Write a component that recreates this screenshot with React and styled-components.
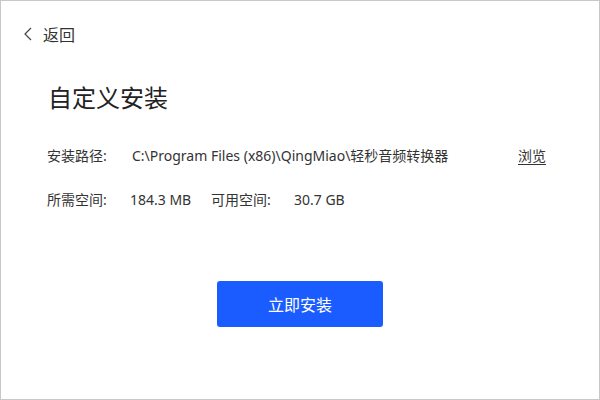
import styled, { createGlobalStyle } from "styled-components";

const Global = createGlobalStyle`
  html, body { margin: 0; padding: 0; background: #fff; }
  body {
    font-family: "Noto Sans", "Noto Sans CJK SC", sans-serif;
    color: #333;
  }
`;

const Window = styled.div`
  width: 600px;
  height: 400px;
  box-sizing: border-box;
  border: 1px solid #c8c8c8;
  background: #fff;
  display: flex;
  flex-direction: column;
`;

const Back = styled.div`
  display: flex;
  align-items: center;
  gap: 11px;
  padding: 23px 0 0 23px;
  height: 20px;
  font-size: 16px;
  color: #333;
  cursor: pointer;
`;

const Title = styled.h1`
  margin: 38px 0 0 47px;
  font-size: 24px;
  font-weight: 400;
  line-height: 32px;
  color: #222;
`;

const Info = styled.div`
  margin: 32px 0 0 46px;
  display: flex;
  flex-direction: column;
  gap: 24px;
  font-size: 14px;
  line-height: 20px;
`;

const Row = styled.div`
  display: flex;
  align-items: center;
`;

const Label = styled.span`
  width: ${(p) => p.w || 83}px;
  flex: none;
`;

const Value = styled.span`
  width: ${(p) => p.w || "auto"}px;
  flex: none;
`;

const Link = styled.a`
  color: #333;
  text-decoration: underline;
  text-underline-offset: 3px;
  cursor: pointer;
`;

const Footer = styled.div`
  display: flex;
  justify-content: center;
  margin-top: 71px;
`;

const Button = styled.button`
  width: 166px;
  height: 46px;
  border: none;
  border-radius: 3px;
  background: #1a5cff;
  color: #fff;
  font-family: "Noto Sans CJK SC", sans-serif;
  font-size: 16px;
  cursor: pointer;
`;

export default function App() {
  return (
    <>
      <Global />
      <Window>
        <Back>
          <svg width="8" height="14" viewBox="0 0 8 14">
            <path d="M7 1 L1 7 L7 13" fill="none" stroke="#444" strokeWidth="1.2" />
          </svg>
          <span>返回</span>
        </Back>
        <Title>自定义安装</Title>
        <Info>
          <Row>
            <Label w={85}>安装路径:</Label>
            <Value w={386}>C:\Program Files (x86)\QingMiao\轻秒音频转换器</Value>
            <Link>浏览</Link>
          </Row>
          <Row>
            <Label>所需空间:</Label>
            <Value w={81}>184.3 MB</Value>
            <Label>可用空间:</Label>
            <Value>30.7 GB</Value>
          </Row>
        </Info>
        <Footer>
          <Button>立即安装</Button>
        </Footer>
      </Window>
    </>
  );
}
